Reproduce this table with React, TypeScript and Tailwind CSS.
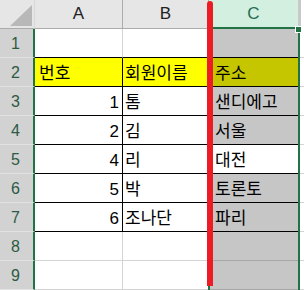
import type { ReactNode } from "react";

type Row = {
  n: number;
  a?: string;
  b?: string;
  c?: string;
  aBg?: string;
  bBg?: string;
  cBg?: string;
  boxed?: boolean;
};

const rows: Row[] = [
  { n: 1 },
  { n: 2, a: "번호", b: "회원이름", c: "주소", aBg: "bg-[#ffff00]", bBg: "bg-[#ffff00]", cBg: "bg-[#c6c600]", boxed: true },
  { n: 3, a: "1", b: "톰", c: "샌디에고", boxed: true },
  { n: 4, a: "2", b: "김", c: "서울", boxed: true },
  { n: 5, a: "4", b: "리", c: "대전", cBg: "bg-white", boxed: true },
  { n: 6, a: "5", b: "박", c: "토론토", boxed: true },
  { n: 7, a: "6", b: "조나단", c: "파리", boxed: true },
  { n: 8 },
  { n: 9 },
];

function Cell({ className, children }: { className: string; children?: ReactNode }) {
  return <div className={`flex h-[29px] shrink-0 items-end border-b leading-none ${className}`}>{children}</div>;
}

export default function App() {
  return (
    <div
      className="relative h-[290px] w-[304px] overflow-hidden bg-white text-[17px] text-black"
      style={{ fontFamily: '"Liberation Sans", "Noto Sans CJK KR", sans-serif' }}
    >
      {/* column headers */}
      <div className="flex h-[29px]">
        <div className="relative h-[29px] w-[35px] shrink-0 border-r border-b border-r-[#d8d8d8] border-b-[#ababab] bg-[#e6e6e6]">
          <svg className="absolute left-0 top-0" width="34" height="28" viewBox="0 0 34 28">
            <polygon points="10,26 32,26 32,5" fill="#b8b8b8" />
          </svg>
        </div>
        <div className="flex w-[88px] shrink-0 items-center justify-center border-r border-b border-r-[#ababab] border-b-[#ababab] bg-[#e6e6e6] text-[#222]">
          A
        </div>
        <div className="flex w-[86px] shrink-0 items-center justify-center border-r border-b border-r-[#ababab] border-b-[#ababab] bg-[#e6e6e6] text-[#222]">
          B
        </div>
        <div className="flex w-[89px] shrink-0 items-center justify-center border-b-2 border-b-[#217346] bg-[#d3efdf] text-[#1f6e53]">
          C
        </div>
        <div className="w-[3px] shrink-0 border-b border-b-[#ababab] bg-[#c9c9c9]" />
        <div className="flex-1 bg-white" />
      </div>

      {rows.map((r) => {
        const edge = r.boxed || rows.find((x) => x.n === r.n + 1)?.boxed;
        const line = edge ? "border-b-black" : "border-b-[#d4d4d4]";
        const cLine = edge ? "border-b-black" : "border-b-[#a6a6a6]";
        return (
          <div key={r.n} className="flex">
            <div className="flex h-[29px] w-[35px] shrink-0 items-center justify-center border-r-2 border-b border-r-[#217346] border-b-[#e2e2e2] bg-[#d2d2d2] pr-[2px] pt-[2px] text-[16px] leading-none text-[#2b5a45]">
              {r.n}
            </div>
            <Cell
              className={`w-[88px] justify-end border-r pb-[4px] pr-[3px] ${line} ${
                r.boxed ? "border-r-black" : "border-r-[#d4d4d4]"
              } ${r.aBg ?? "bg-white"} ${r.n === 2 ? "justify-start pl-[4px]" : ""}`}
            >
              {r.a}
            </Cell>
            <Cell
              className={`w-[86px] border-r pb-[4px] pl-[2px] ${line} ${
                r.boxed ? "border-r-black" : "border-r-[#d4d4d4]"
              } ${r.bBg ?? "bg-white"}`}
            >
              {r.b}
            </Cell>
            <Cell className={`w-[89px] pb-[4px] pl-[6px] ${cLine} ${r.cBg ?? "bg-[#c6c6c6]"}`}>{r.c}</Cell>
            <Cell className="flex-1 border-b-[#d4d4d4] bg-white" />
          </div>
        );
      })}

      {/* selected column outline with fill handle */}
      <div className="pointer-events-none absolute left-[208px] top-[27px] h-[270px] w-[92px] border-2 border-[#217346]" />
      <div className="pointer-events-none absolute left-[295px] top-[26px] h-[7px] w-[7px] border border-white bg-[#217346]" />

      {/* red marker stroke */}
      <div className="pointer-events-none absolute left-[207px] top-[1px] h-[285px] w-[6px] rounded-t-full rounded-bl-[3px] bg-[#ed1c24]" />
    </div>
  );
}
